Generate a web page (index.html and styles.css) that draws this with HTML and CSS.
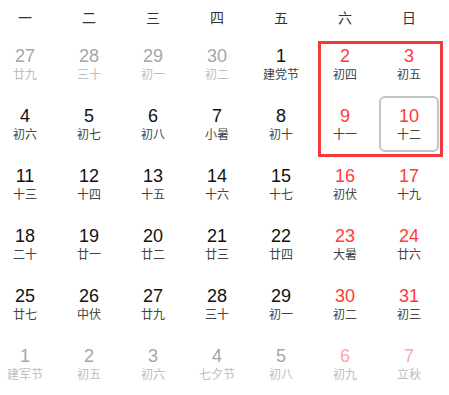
FILE: index.html
```html
<!DOCTYPE html>
<html lang="zh">
<head>
<meta charset="utf-8">
<link rel="stylesheet" href="styles.css">
</head>
<body>
<div class="cal">
  <div class="head">
    <span>一</span><span>二</span><span>三</span><span>四</span><span>五</span><span>六</span><span>日</span>
  </div>
  <div class="grid">
    <div class="cell other"><b>27</b><i>廿九</i></div>
    <div class="cell other"><b>28</b><i>三十</i></div>
    <div class="cell other"><b>29</b><i>初一</i></div>
    <div class="cell other"><b>30</b><i>初二</i></div>
    <div class="cell"><b>1</b><i>建党节</i></div>
    <div class="cell we"><b>2</b><i>初四</i></div>
    <div class="cell we"><b>3</b><i>初五</i></div>

    <div class="cell"><b>4</b><i>初六</i></div>
    <div class="cell"><b>5</b><i>初七</i></div>
    <div class="cell"><b>6</b><i>初八</i></div>
    <div class="cell"><b>7</b><i>小暑</i></div>
    <div class="cell"><b>8</b><i>初十</i></div>
    <div class="cell we"><b>9</b><i>十一</i></div>
    <div class="cell we sel"><b>10</b><i>十二</i></div>

    <div class="cell"><b>11</b><i>十三</i></div>
    <div class="cell"><b>12</b><i>十四</i></div>
    <div class="cell"><b>13</b><i>十五</i></div>
    <div class="cell"><b>14</b><i>十六</i></div>
    <div class="cell"><b>15</b><i>十七</i></div>
    <div class="cell we"><b>16</b><i>初伏</i></div>
    <div class="cell we"><b>17</b><i>十九</i></div>

    <div class="cell"><b>18</b><i>二十</i></div>
    <div class="cell"><b>19</b><i>廿一</i></div>
    <div class="cell"><b>20</b><i>廿二</i></div>
    <div class="cell"><b>21</b><i>廿三</i></div>
    <div class="cell"><b>22</b><i>廿四</i></div>
    <div class="cell we"><b>23</b><i>大暑</i></div>
    <div class="cell we"><b>24</b><i>廿六</i></div>

    <div class="cell"><b>25</b><i>廿七</i></div>
    <div class="cell"><b>26</b><i>中伏</i></div>
    <div class="cell"><b>27</b><i>廿九</i></div>
    <div class="cell"><b>28</b><i>三十</i></div>
    <div class="cell"><b>29</b><i>初一</i></div>
    <div class="cell we"><b>30</b><i>初二</i></div>
    <div class="cell we"><b>31</b><i>初三</i></div>

    <div class="cell other"><b>1</b><i>建军节</i></div>
    <div class="cell other"><b>2</b><i>初五</i></div>
    <div class="cell other"><b>3</b><i>初六</i></div>
    <div class="cell other"><b>4</b><i>七夕节</i></div>
    <div class="cell other"><b>5</b><i>初八</i></div>
    <div class="cell other we"><b>6</b><i>初九</i></div>
    <div class="cell other we"><b>7</b><i>立秋</i></div>
  </div>
  <div class="mark"></div>
</div>
</body>
</html>
```
FILE: styles.css
```css
html, body {
  margin: 0;
  padding: 0;
  background: #fff;
}
body {
  width: 449px;
  height: 395px;
  overflow: hidden;
  font-family: "Liberation Sans", "Noto Sans CJK SC", sans-serif;
}
.cal {
  position: relative;
  margin-left: -5px;
  width: 444px;
}
.head {
  display: grid;
  grid-template-columns: repeat(7, 60px);
  column-gap: 4px;
  height: 36px;
  align-items: center;
  font-size: 14px;
  color: #333;
  text-align: center;
  font-family: "Noto Sans CJK SC", sans-serif;
}
.head span {
  line-height: 20px;
  padding-bottom: 2px;
}
.grid {
  display: grid;
  grid-template-columns: repeat(7, 60px);
  grid-auto-rows: 56px;
  gap: 4px;
}
.cell {
  display: flex;
  flex-direction: column;
  align-items: center;
  justify-content: center;
  box-sizing: border-box;
  border: 2px solid transparent;
  border-radius: 6px;
}
.cell b {
  font-weight: normal;
  font-size: 18px;
  line-height: 20px;
  color: #111;
}
.cell i {
  font-style: normal;
  font-size: 12px;
  line-height: 16px;
  color: #444;
  font-family: "Noto Sans CJK SC", sans-serif;
}
.cell.we b {
  color: #ff3a3a;
}
.cell.other b {
  color: #a6a6a6;
}
.cell.other i {
  color: #bdbdbd;
}
.cell.other.we b {
  color: #ffa6a6;
}
.cell.sel {
  border-color: #c2c4cc;
}
.mark {
  position: absolute;
  left: 323px;
  top: 41px;
  width: 125px;
  height: 116px;
  box-sizing: border-box;
  border: 3px solid #f23a3a;
}
```
